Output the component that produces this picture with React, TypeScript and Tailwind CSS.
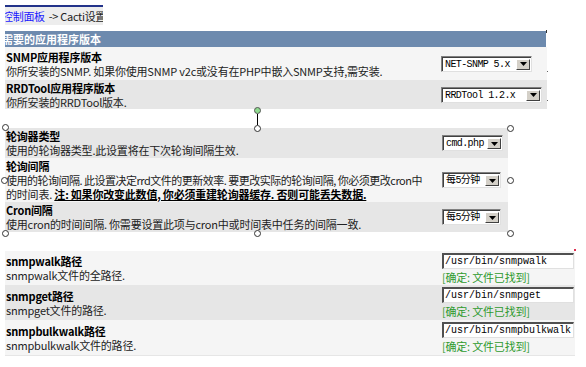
import React from "react";

const CJK = "font-['Noto_Sans_CJK_SC','Noto_Sans',sans-serif]";
const MONO = "font-['Liberation_Mono','Noto_Sans_CJK_SC',monospace]";

function Select({ cls, label }: { cls: string; label: string }) {
  return (
    <div className={`flex h-[16px] border border-[#808080] border-r-[#e0e0e0] border-b-[#e0e0e0] bg-white ${cls}`}>
      <div className="flex min-w-0 flex-1 border-t border-l border-[#404040] border-r-0 border-b-0">
        <div className={`min-w-0 flex-1 overflow-hidden whitespace-nowrap pl-[2px] text-[10px] leading-[13px] tracking-[-0.6px] text-black ${MONO}`}>
          {label}
        </div>
        <div className="my-[1px] mr-[1px] flex w-[14px] shrink-0 items-center justify-center border border-t-white border-l-white border-r-[#404040] border-b-[#404040] bg-[#d4d0c8]">
          <svg width="7" height="4" viewBox="0 0 7 4">
            <path d="M0 0h7L3.5 4z" fill="#000" />
          </svg>
        </div>
      </div>
    </div>
  );
}

function PathInput({ value }: { value: string }) {
  return (
    <div className="flex flex-col">
      <div className={`h-[16px] w-[132px] overflow-hidden whitespace-nowrap border-t-2 border-l-2 border-t-[#505050] border-l-[#505050] border-r border-b border-r-[#e0e0e0] border-b-[#e0e0e0] bg-white pl-[1px] text-[10px] leading-[13px] text-black ${MONO}`}>
        {value}
      </div>
      <div className={`mt-[1px] text-[11px] leading-[14px] tracking-[-0.2px] text-[#2e9a2e] ${CJK}`}>[确定: 文件已找到]</div>
    </div>
  );
}

function Left({ title, children }: { title: string; children: React.ReactNode }) {
  return (
    <div className={`flex-1 whitespace-nowrap pl-[1px] text-[11px] leading-[14px] tracking-[-0.2px] text-black ${CJK}`}>
      <div className="font-bold">{title}</div>
      <div className="text-[#222]">{children}</div>
    </div>
  );
}

function Handle({ cls }: { cls: string }) {
  return <div className={`absolute h-[7px] w-[7px] rounded-full border border-[#333] bg-white ${cls}`} />;
}

export default function App() {
  return (
    <div className="relative h-[367px] w-[586px] overflow-hidden bg-white">
      <div className="flex flex-col pl-[5px] pt-[5px]">
        {/* breadcrumb */}
        <div className={`flex h-[20px] w-[98px] items-center overflow-hidden whitespace-nowrap border-t-2 border-[#23338a] bg-[#ededed] text-[11px] tracking-[-0.3px] ${CJK}`}>
          <span className="-ml-[3px] text-[#1a1aff]">控制面板</span>
          <span className="ml-[4px] text-[#222]">-&gt; Cacti设置</span>
          <span className="ml-[3px] text-[#1a1aff]">控</span>
        </div>

        {/* header */}
        <div className={`mt-[6px] flex h-[16px] w-[541px] items-center overflow-hidden whitespace-nowrap bg-[#6d8aae] text-[11px] font-bold text-white ${CJK}`}>
          <span className="-ml-[3px]">需要的应用程序版本</span>
        </div>

        {/* group 1 */}
        <div className="flex h-[33px] w-[542px] items-center bg-[#f5f5f5]">
          <Left title="SNMP应用程序版本">你所安装的SNMP. 如果你使用SNMP v2c或没有在PHP中嵌入SNMP支持,需安装.</Left>
          <div className="w-[106px]">
            <Select cls="w-[91px]" label="NET-SNMP 5.x" />
          </div>
        </div>
        <div className="flex h-[29px] w-[542px] items-center bg-[#e6e6e6]">
          <Left title="RRDTool应用程序版本">你所安装的RRDTool版本.</Left>
          <div className="w-[106px]">
            <Select cls="w-[101px]" label="RRDTool 1.2.x" />
          </div>
        </div>

        {/* group 2 */}
        <div className="mt-[19px] flex h-[30px] w-[503px] items-center bg-[#e6e6e6]">
          <Left title="轮询器类型">使用的轮询器类型.此设置将在下次轮询间隔生效.</Left>
          <div className="w-[66px]">
            <Select cls="w-[61px]" label="cmd.php" />
          </div>
        </div>
        <div className="flex h-[44px] w-[503px] items-center bg-[#f5f5f5]">
          <Left title="轮询间隔">
            <span className="tracking-[-0.5px]">使用的轮询间隔. 此设置决定rrd文件的更新效率. 要更改实际的轮询间隔, 你必须更改cron中</span>
            <br />
            的时间表. <span className="font-bold text-black underline">注: 如果你改变此数值, 你必须重建轮询器缓存. 否则可能丢失数据.</span>
          </Left>
          <div className="w-[66px]">
            <Select cls="w-[59px]" label="每5分钟" />
          </div>
        </div>
        <div className="flex h-[30px] w-[503px] items-center bg-[#e6e6e6]">
          <Left title="Cron间隔">使用cron的时间间隔. 你需要设置此项与cron中或时间表中任务的间隔一致.</Left>
          <div className="w-[66px]">
            <Select cls="w-[59px]" label="每5分钟" />
          </div>
        </div>

        {/* group 3 */}
        <div className="mt-[19px] flex h-[34px] w-[570px] items-center bg-[#f5f5f5]">
          <Left title="snmpwalk路径">snmpwalk文件的全路径.</Left>
          <div className="w-[133px]">
            <PathInput value="/usr/bin/snmpwalk" />
          </div>
        </div>
        <div className="flex h-[35px] w-[570px] items-center bg-[#e6e6e6]">
          <Left title="snmpget路径">snmpget文件的路径.</Left>
          <div className="w-[133px]">
            <PathInput value="/usr/bin/snmpget" />
          </div>
        </div>
        <div className="flex h-[36px] w-[570px] items-center border-b border-[#e6e6e6] bg-[#f5f5f5]">
          <Left title="snmpbulkwalk路径">snmpbulkwalk文件的路径.</Left>
          <div className="w-[133px]">
            <PathInput value="/usr/bin/snmpbulkwalk" />
          </div>
        </div>
      </div>

      {/* small artifacts */}
      <div className="absolute left-[546px] top-[30px] h-[3px] w-px bg-[#333]" />
      <div className="absolute left-[547px] top-[71px] h-px w-px bg-[#666]" />
      <div className="absolute left-[547px] top-[100px] h-px w-px bg-[#666]" />
      <div className="absolute left-[574px] top-[249px] h-[2px] w-[2px] bg-[#e03050]" />

      {/* selection handles */}
      <div className="absolute left-[254px] top-[107px] h-[7px] w-[7px] rounded-full border border-[#555] bg-[#8fdc8f]" />
      <div className="absolute left-[257px] top-[114px] h-[11px] w-px bg-black" />
      <Handle cls="left-[2px] top-[124px]" />
      <Handle cls="left-[254px] top-[125px]" />
      <Handle cls="left-[507px] top-[125px]" />
      <Handle cls="left-[1px] top-[177px]" />
      <Handle cls="left-[507px] top-[177px]" />
      <Handle cls="left-[2px] top-[230px]" />
      <Handle cls="left-[254px] top-[230px]" />
      <Handle cls="left-[507px] top-[230px]" />
    </div>
  );
}
